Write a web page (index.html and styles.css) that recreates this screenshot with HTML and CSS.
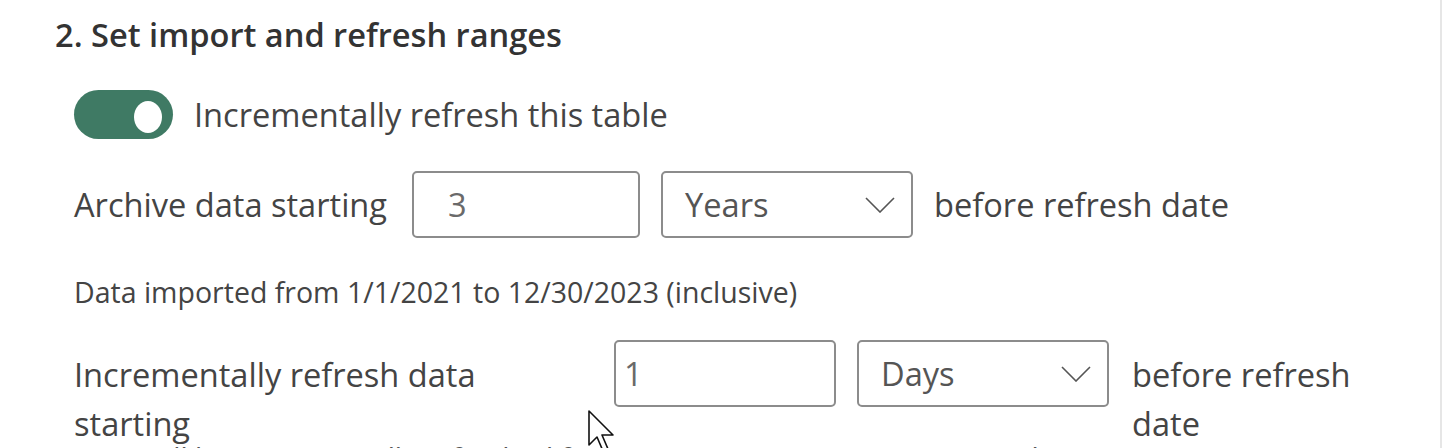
FILE: index.html
```html
<!DOCTYPE html>
<html lang="en">
<head>
<meta charset="utf-8">
<title>Set import and refresh ranges</title>
<link rel="stylesheet" href="styles.css">
</head>
<body>
<div class="panel">
  <h2 class="title">2. Set import and refresh ranges</h2>
  <div class="section">
    <div class="toggle-row">
      <span class="toggle"><span class="knob"></span></span>
      <span class="toggle-label">Incrementally refresh this table</span>
    </div>
    <div class="range-row">
      <span class="label">Archive data starting</span>
      <div class="input input-archive">3</div>
      <div class="select">
        <span>Years</span>
        <svg class="chev" viewBox="0 0 30 16" width="30" height="16"><path d="M1 1 L15 15 L29 1" fill="none" stroke="#555" stroke-width="1.6"/></svg>
      </div>
      <span class="suffix">before refresh date</span>
    </div>
    <p class="note">Data imported from 1/1/2021 to 12/30/2023 (inclusive)</p>
    <div class="range-row range-row-top">
      <span class="label label-wide">Incrementally refresh data starting</span>
      <div class="input input-refresh">1</div>
      <div class="select">
        <span>Days</span>
        <svg class="chev" viewBox="0 0 30 16" width="30" height="16"><path d="M1 1 L15 15 L29 1" fill="none" stroke="#555" stroke-width="1.6"/></svg>
      </div>
      <span class="suffix suffix-narrow">before refresh date</span>
    </div>
    <p class="note note-last">Data will be incrementally refreshed from 12/31/2023 to 12/31/2023 (inclusive)</p>
  </div>
  <svg class="cursor" viewBox="0 0 26 42" width="26" height="42"><path d="M1 1 L1 35 L9 27 L15 41 L20 39 L14 25 L25 25 Z" fill="#fff" stroke="#111" stroke-width="1.6" stroke-linejoin="round"/></svg>
</div>
</body>
</html>
```

FILE: styles.css
```css
html, body {
  margin: 0;
  padding: 0;
  background: #ffffff;
}
body {
  width: 1442px;
  height: 448px;
  overflow: hidden;
  font-family: "Open Sans", "Noto Sans", sans-serif;
  color: #444444;
}
.panel {
  position: relative;
  height: 448px;
  padding: 13px 0 0 55px;
  box-sizing: border-box;
  border-right: 2px solid #e6e6e6;
  width: 1442px;
}
.title {
  margin: 0;
  font-size: 32.6px;
  line-height: 44px;
  font-weight: 600;
  color: #333333;
}
.section {
  padding-left: 19px;
}
.toggle-row {
  display: flex;
  align-items: center;
  gap: 21px;
  margin-top: 33px;
  height: 49px;
}
.toggle {
  display: flex;
  align-items: center;
  justify-content: flex-end;
  width: 99px;
  height: 49px;
  border-radius: 25px;
  background: #3f7a64;
  box-sizing: border-box;
  padding: 5px 11px 0 0;
}
.knob {
  width: 28px;
  height: 32px;
  border-radius: 50%;
  background: #ffffff;
}
.toggle-label, .label, .suffix {
  font-size: 32.6px;
  line-height: 49px;
  color: #444444;
}
.range-row {
  display: flex;
  align-items: center;
  margin-top: 32px;
}
.range-row-top {
  align-items: flex-start;
  margin-top: 28px;
}
.label {
  margin-right: 25px;
}
.label-wide {
  width: 500px;
  margin-top: 10px;
  margin-right: 40px;
}
.input {
  box-sizing: border-box;
  height: 67px;
  border: 2px solid #8c8c8c;
  border-radius: 5px;
  display: flex;
  align-items: center;
  font-size: 32.6px;
  color: #6a6a6a;
}
.input-archive {
  width: 228px;
  padding-left: 34px;
}
.input-refresh {
  width: 222px;
  padding-left: 8px;
}
.select {
  box-sizing: border-box;
  width: 252px;
  height: 67px;
  margin-left: 21px;
  border: 2px solid #8c8c8c;
  border-radius: 5px;
  display: flex;
  align-items: center;
  justify-content: space-between;
  padding: 0 16px 0 22px;
  font-size: 32.6px;
  color: #555555;
}
.chev {
  display: block;
}
.suffix {
  margin-left: 21px;
}
.suffix-narrow {
  width: 240px;
  margin-top: 10px;
  margin-left: 23px;
}
.note {
  margin: 34px 0 0;
  font-size: 28.5px;
  line-height: 40px;
  color: #444444;
}
.note-last {
  margin-top: -10px;
  color: #555555;
}
.cursor {
  position: absolute;
  left: 588px;
  top: 410px;
}
```
